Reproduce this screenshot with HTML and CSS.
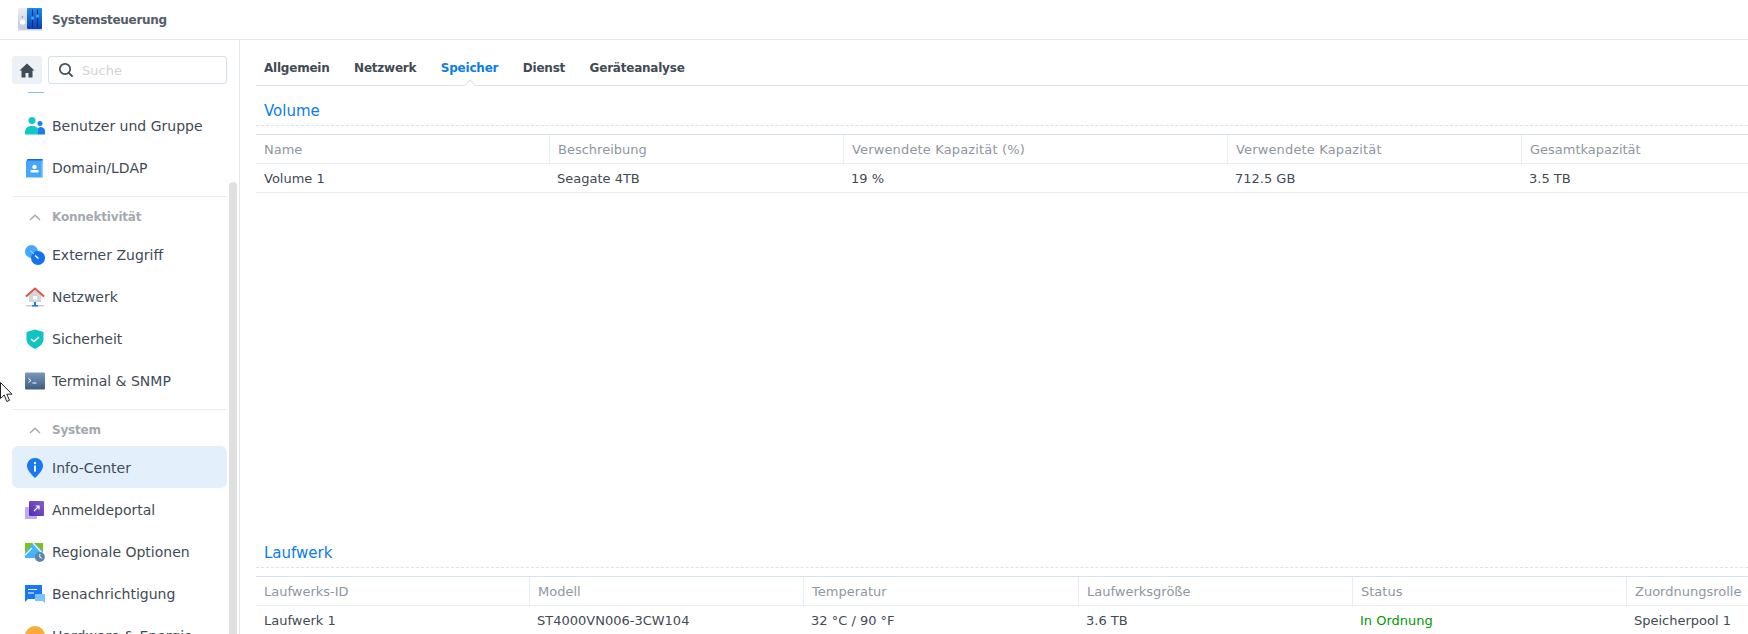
FILE: index.html
```html
<!DOCTYPE html>
<html>
<head>
    <title>Systemsteuerung</title>
    <link rel="stylesheet" href="styles.css">
</head>
<body>
    <header class="titlebar">
        <svg class="app-icon" width="24" height="23" viewBox="0 0 24 23">
            <defs>
                <linearGradient id="appblue" x1="0" y1="0" x2="0" y2="1"><stop offset="0" stop-color="#1c8cf0"/><stop offset="1" stop-color="#0a3fb5"/></linearGradient>
                <linearGradient id="appgrey" x1="0" y1="0" x2="0" y2="1"><stop offset="0" stop-color="#eceef4"/><stop offset="1" stop-color="#c4c9dc"/></linearGradient>
            </defs>
            <rect x="0" y="0" width="10" height="21" rx="1.5" fill="url(#appgrey)"/>
            <rect x="9" y="0" width="15" height="21" rx="1" fill="url(#appblue)"/>
            <path d="M14.500 1.500v18M19.500 1.500v18" stroke="#082a78" stroke-width="1"/>
            <circle cx="14.500" cy="10" r="1.700" fill="#3f9cf5"/>
            <circle cx="19.500" cy="8" r="1.700" fill="#3f9cf5"/>
            <circle cx="4.500" cy="9" r="0.800" fill="#8d93a5"/>
            <circle cx="4.500" cy="14" r="2.600" fill="#fff"/>
            <rect x="0" y="21" width="24" height="1.500" fill="#cfd3e0"/>
        </svg>
        <span class="app-title">Systemsteuerung</span>
    </header>

    <div class="main">
        <aside class="sidebar">
            <div class="search-row">
                <div class="home-btn">
                    <svg width="16" height="15" viewBox="0 0 16 15"><path d="M8 0.500 0.500 7.500H2.500V14.500H6.500V10H9.500V14.500H13.500V7.500H15.500Z" fill="#414b55"/></svg>
                </div>
                <div class="search-box">
                    <svg width="16" height="16" viewBox="0 0 16 16"><circle cx="7" cy="7" r="5.200" fill="none" stroke="#414b55" stroke-width="1.700"/><path d="M10.800 10.800 14.600 14.600" stroke="#414b55" stroke-width="1.900"/></svg>
                    <span class="search-text">Suche</span>
                </div>
            </div>
            <div class="scrollbar"></div>
            <div class="nav">
                <div class="nav-sliver"></div>

                <div class="nav-item">
                    <svg class="nav-icon" viewBox="0 0 20 20"><circle cx="7" cy="4.500" r="3.500" fill="#12c7c9"/><path d="M0 18.500v-3C0 12 3 10 7 10s6 1.500 7 4v4.500Z" fill="#12c7c9"/><circle cx="15" cy="7.500" r="2.500" fill="#1c7df2"/><path d="M13 18.500v-5c0-1.500 1-2.500 2.500-2.500s4.500 1 4.500 4v3.500Z" fill="#1c7df2"/></svg>
                    <span>Benutzer und Gruppe</span>
                </div>
                <div class="nav-item">
                    <svg class="nav-icon" viewBox="0 0 20 20"><rect x="2" y="1" width="16" height="4" rx="1" fill="#1466d8"/><rect x="1" y="2.500" width="17" height="17" rx="0.500" fill="#45a7fb"/><rect x="16.500" y="2.500" width="1.500" height="17" fill="#8cc8fc"/><circle cx="9.500" cy="9" r="2.200" fill="#fff"/><rect x="5.500" y="12" width="8" height="2.500" fill="#fff"/></svg>
                    <span>Domain/LDAP</span>
                </div>

                <div class="nav-divider"></div>
                <div class="nav-group">
                    <svg class="chevron" width="12" height="7" viewBox="0 0 12 7"><path d="M1 6 6 1.200 11 6" fill="none" stroke="#a4a9af" stroke-width="1.400"/></svg>
                    <span>Konnektivität</span>
                </div>
                <div class="nav-item">
                    <svg class="nav-icon" viewBox="0 0 20 20"><circle cx="6.500" cy="6.500" r="6.500" fill="#45a7fb"/><circle cx="13" cy="13" r="7" fill="#1372ee"/><path d="M5 5.500 9 9" stroke="#bfe0fd" stroke-width="1"/><path d="M10 10.500 13.500 13.500" stroke="#fff" stroke-width="1.500"/></svg>
                    <span>Externer Zugriff</span>
                </div>
                <div class="nav-item">
                    <svg class="nav-icon" viewBox="0 0 20 20"><path d="M4 8 10 3 16 8V15H4Z" fill="#d4d6dc"/><rect x="8" y="9" width="4" height="3.500" fill="#fff"/><path d="M1 9.500 10 1.500 19 9.500" fill="none" stroke="#e0504a" stroke-width="2"/><rect x="1" y="18" width="18" height="1.500" fill="#c9ccd4"/><path d="M10 15v4" stroke="#1c7df2" stroke-width="2"/><rect x="7" y="18" width="6" height="1.500" fill="#1c7df2"/></svg>
                    <span>Netzwerk</span>
                </div>
                <div class="nav-item">
                    <svg class="nav-icon" viewBox="0 0 20 20"><path d="M10 0.500 18.500 3V10.500C18.500 15 14 18 10 20 6 18 1.500 15 1.500 10.500V3Z" fill="#10c4c4"/><path d="M6 10 9 12.500 14 8" fill="none" stroke="#fff" stroke-width="1.500"/></svg>
                    <span>Sicherheit</span>
                </div>
                <div class="nav-item">
                    <svg class="nav-icon" viewBox="0 0 20 20"><defs><linearGradient id="term" x1="0" y1="0" x2="0" y2="1"><stop offset="0" stop-color="#7a97bd"/><stop offset="1" stop-color="#3f5d80"/></linearGradient></defs><rect x="0" y="1.500" width="20" height="17" rx="1" fill="url(#term)"/><path d="M3.500 7.500 6 9.500 3.500 11.500" fill="none" stroke="#fff" stroke-width="1"/><path d="M7.500 12H11.500" stroke="#fff" stroke-width="1"/></svg>
                    <span>Terminal &amp; SNMP</span>
                </div>

                <div class="nav-divider"></div>
                <div class="nav-group">
                    <svg class="chevron" width="12" height="7" viewBox="0 0 12 7"><path d="M1 6 6 1.200 11 6" fill="none" stroke="#a4a9af" stroke-width="1.400"/></svg>
                    <span>System</span>
                </div>
                <div class="nav-item active">
                    <svg class="nav-icon" viewBox="0 0 20 20"><path d="M10 0C5.500 0 2 3.500 2 8c0 4 4.500 8.500 8 12 3.500-3.500 8-8 8-12 0-4.500-3.500-8-8-8Z" fill="#1877f2"/><circle cx="10" cy="5" r="1.200" fill="#fff"/><rect x="9" y="7.500" width="2" height="6" fill="#fff"/></svg>
                    <span>Info-Center</span>
                </div>
                <div class="nav-item">
                    <svg class="nav-icon" viewBox="0 0 20 20"><defs><linearGradient id="portal" x1="1" y1="0" x2="0" y2="1"><stop offset="0" stop-color="#8a5ad0"/><stop offset="1" stop-color="#4a30b0"/></linearGradient></defs><rect x="0" y="7" width="12" height="12" rx="0.500" fill="#c3aaf0"/><rect x="4" y="1" width="15" height="15" rx="1" fill="url(#portal)"/><path d="M9 11 14 6M10.500 6H14V9.500" fill="none" stroke="#fff" stroke-width="1.200"/></svg>
                    <span>Anmeldeportal</span>
                </div>
                <div class="nav-item">
                    <svg class="nav-icon" viewBox="0 0 20 20"><rect x="0" y="1" width="18" height="15" fill="#45b4fb"/><path d="M0 1H8L0 11Z" fill="#7cc21c"/><path d="M9 1H18V9Z" fill="#7cc21c"/><path d="M8 1 18 12M0 13 7 6" stroke="#fff" stroke-width="1.200"/><circle cx="14.800" cy="15" r="5" fill="#5d86ad"/><path d="M14.800 12v3.200l2 1" fill="none" stroke="#fff" stroke-width="1"/></svg>
                    <span>Regionale Optionen</span>
                </div>
                <div class="nav-item">
                    <svg class="nav-icon" viewBox="0 0 20 20"><path d="M0 1H17V15H3L0 18Z" fill="#1877f2"/><path d="M3 5.500H12M3 9H9" stroke="#fff" stroke-width="1.200"/><path d="M10 10H20V19L17.500 17H10Z" fill="#7cc2fb"/></svg>
                    <span>Benachrichtigung</span>
                </div>
                <div class="nav-item">
                    <svg class="nav-icon" viewBox="0 0 20 20"><circle cx="10" cy="10" r="10" fill="#f9ab3c"/><path d="M10 8v6" stroke="#fff" stroke-width="1.500"/></svg>
                    <span>Hardware &amp; Energie</span>
                </div>
            </div>
        </aside>

        <main class="content">
            <nav class="tabs">
                <span class="tab">Allgemein</span>
                <span class="tab">Netzwerk</span>
                <span class="tab tab-active">Speicher</span>
                <span class="tab">Dienst</span>
                <span class="tab">Geräteanalyse</span>
            </nav>

            <section class="section section-volume">
                <h2 class="section-title">Volume</h2>
                <div class="grid-head grid-volume">
                    <div>Name</div>
                    <div>Beschreibung</div>
                    <div class="wide">Verwendete Kapazität (%)</div>
                    <div class="wide">Verwendete Kapazität</div>
                    <div>Gesamtkapazität</div>
                </div>
                <div class="grid-row grid-volume">
                    <div>Volume 1</div>
                    <div>Seagate 4TB</div>
                    <div>19 %</div>
                    <div>712.5 GB</div>
                    <div>3.5 TB</div>
                </div>
            </section>

            <section class="section">
                <h2 class="section-title">Laufwerk</h2>
                <div class="grid-head grid-drive">
                    <div>Laufwerks-ID</div>
                    <div>Modell</div>
                    <div>Temperatur</div>
                    <div>Laufwerksgröße</div>
                    <div>Status</div>
                    <div>Zuordnungsrolle</div>
                </div>
                <div class="grid-row grid-drive">
                    <div>Laufwerk 1</div>
                    <div>ST4000VN006-3CW104</div>
                    <div>32 °C / 90 °F</div>
                    <div>3.6 TB</div>
                    <div class="status-ok">In Ordnung</div>
                    <div>Speicherpool 1</div>
                </div>
            </section>
        </main>
    </div>

    <svg class="cursor" width="13" height="21" viewBox="0 0 13 21"><path d="M0.500 0.500V16.500L4.200 13 6.800 19.500 9.500 18.300 6.800 12.200H12Z" fill="#fff" stroke="#222" stroke-width="1"/></svg>
</body>
</html>
```

FILE: styles.css
```css
html, body {
    margin: 0;
    padding: 0;
    height: 634px;
    overflow: hidden;
}

body {
    font-family: "DejaVu Sans", sans-serif;
    font-size: 13px;
    color: #414b55;
    background-color: #fff;
}

.titlebar {
    height: 39px;
    display: flex;
    align-items: center;
    padding-left: 18px;
    border-bottom: 1px solid #e3e7ec;
}

.app-title {
    margin-left: 10px;
    font-size: 12px;
    font-weight: bold;
    letter-spacing: -0.3px;
    color: #555d68;
}

.main {
    display: flex;
    height: 594px;
}

.sidebar {
    position: relative;
    width: 239px;
    flex-shrink: 0;
    border-right: 1px solid #e3e7ec;
    overflow: hidden;
}

.search-row {
    display: flex;
    gap: 6px;
    padding: 16px 12px 8px 12px;
}

.home-btn {
    width: 30px;
    height: 28px;
    display: flex;
    align-items: center;
    justify-content: center;
    background-color: #edf0f4;
    border-radius: 3px;
}

.search-box {
    width: 168px;
    height: 26px;
    display: flex;
    align-items: center;
    gap: 8px;
    padding-left: 9px;
    border: 1px solid #d5dfe9;
    border-radius: 3px;
}

.search-text {
    color: #d0d3d7;
}

.scrollbar {
    position: absolute;
    left: 229px;
    top: 142px;
    width: 8px;
    bottom: 0;
    background-color: #e0e0e0;
    border-radius: 4px 4px 0 0;
}

.nav {
    padding: 0 12px 0 12px;
    width: 215px;
}

.nav-sliver {
    width: 16px;
    height: 1px;
    margin: 0 0 11px 16px;
    background-color: #8ab8fb;
}

.nav-item {
    height: 42px;
    box-sizing: border-box;
    display: flex;
    align-items: center;
    padding: 1px 0 0 13px;
    border-radius: 6px;
    font-size: 14px;
}

.nav-item.active {
    background-color: #e3f0fc;
}

.nav-icon {
    width: 20px;
    height: 20px;
    margin-right: 7px;
    flex-shrink: 0;
}

.nav-divider {
    height: 1px;
    margin-top: 8px;
    background-color: #e9ebee;
}

.nav-group {
    height: 36px;
    box-sizing: border-box;
    display: flex;
    align-items: center;
    padding: 4px 0 0 17px;
    font-size: 12px;
    font-weight: bold;
    letter-spacing: -0.2px;
    color: #a4a9af;
}

.chevron {
    margin-right: 11px;
}

.content {
    flex: 1;
    min-width: 0;
    padding-left: 16px;
}

.tabs {
    position: relative;
    height: 45px;
    display: flex;
    align-items: flex-end;
    gap: 24.5px;
    padding-left: 8px;
    border-bottom: 1px solid #dde3ea;
}

.tab {
    padding-bottom: 10px;
    font-size: 12px;
    font-weight: bold;
    letter-spacing: -0.22px;
    color: #414b55;
}

.tab-active {
    position: relative;
    color: #0a7cec;
}

/* little notch under the selected tab */
.tab-active::after {
    content: "";
    position: absolute;
    left: 25px;
    bottom: -4px;
    width: 7px;
    height: 7px;
    background-color: #fff;
    border-left: 1px solid #dde3ea;
    border-top: 1px solid #dde3ea;
    transform: rotate(45deg);
}

.section {
    padding-top: 16px;
    box-sizing: border-box;
}

.section-volume {
    height: 442px;
}

.section-title {
    margin: 0 0 8px 0;
    padding: 0 0 5px 8px;
    font-size: 15px;
    font-weight: normal;
    color: #0a7cec;
    line-height: 18px;
    border-bottom: 1px dashed #dfe3e8;
}

.grid-volume {
    grid-template-columns: 293px 294px 384px 294px 1fr;
}

.grid-drive {
    grid-template-columns: 273px 274px 275px 274px 274px 1fr;
}

.grid-head, .grid-row {
    display: grid;
    height: 28px;
    align-items: center;
}

.grid-head {
    border-top: 1px solid #d8e2ec;
    border-bottom: 1px solid #e9ecf0;
    color: #9096a0;
}

.grid-head > div {
    height: 100%;
    line-height: 30px;
    padding-left: 8px;
    box-sizing: border-box;
    border-left: 1px solid #e9ecf0;
}

.grid-head > div:first-child {
    border-left: none;
}

.grid-head > .wide {
    letter-spacing: 0.15px;
}

.grid-row {
    border-bottom: 1px solid #e9ecf0;
}

.grid-row > div {
    padding-left: 8px;
}

.status-ok {
    color: #009900;
}

.cursor {
    position: absolute;
    left: 0;
    top: 382px;
}
```
